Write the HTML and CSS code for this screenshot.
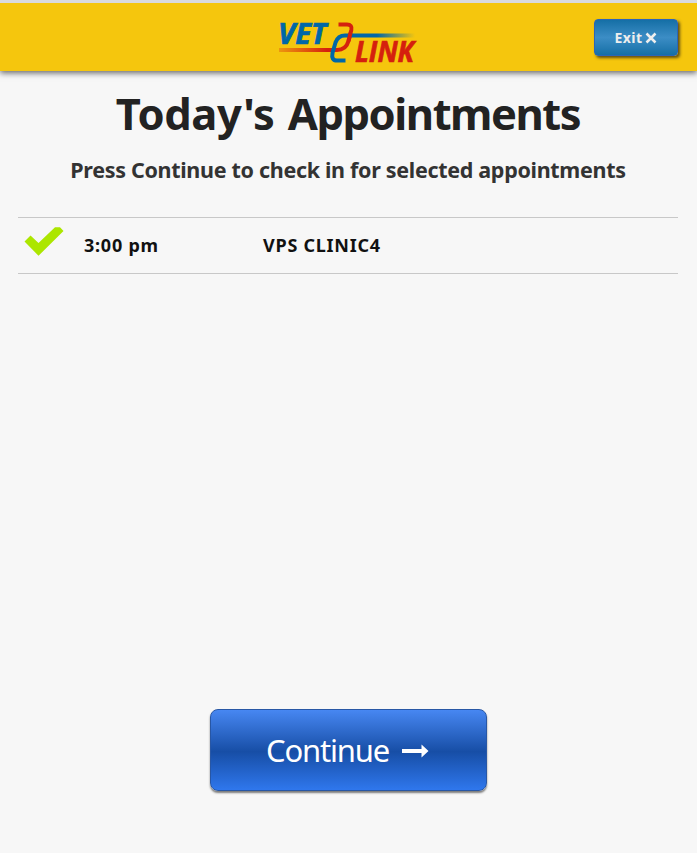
FILE: index.html
```html
<!DOCTYPE html>
<html lang="en">
<head>
<meta charset="utf-8">
<title>Today's Appointments</title>
<link rel="stylesheet" href="styles.css">
</head>
<body>
<header class="bar">
  <svg class="logo" width="150" height="60" viewBox="0 0 150 60" role="img" aria-label="VetLink">
    <defs>
      <linearGradient id="red" gradientUnits="userSpaceOnUse" x1="2" y1="0" x2="50" y2="0"><stop offset="0" stop-color="#d92a0d" stop-opacity=".3"/><stop offset="1" stop-color="#d5200e"/></linearGradient>
      <linearGradient id="blue" gradientUnits="userSpaceOnUse" x1="100" y1="0" x2="138" y2="0"><stop offset="0" stop-color="#0067a8"/><stop offset="1" stop-color="#0067a8" stop-opacity="0"/></linearGradient>
    </defs>
    <text class="logo-text vet" x="1" y="32.500" textLength="48.500" lengthAdjust="spacingAndGlyphs">VET</text>
    <text class="logo-text link" x="78" y="51" textLength="59" lengthAdjust="spacingAndGlyphs">LINK</text>
    <path d="M61.500 13.500H70Q75.500 13.500 74.300 19L71.500 30Q69 39 60 39H2" fill="none" stroke="url(#red)" stroke-width="4"/>
    <path d="M68.500 49.500H60Q54 49.500 55.500 42L58.500 31.500Q61 24.500 68 24.500H138" fill="none" stroke="url(#blue)" stroke-width="4"/>
    <path d="M73.500 22L71.500 30" fill="none" stroke="#d5200e" stroke-width="4"/>
  </svg>
  <button class="exit"><span>Exit</span>
    <svg width="12" height="12" viewBox="0 0 12 12"><path d="M1.500 1.500L10.500 10.500M10.500 1.500L1.500 10.500" stroke="#eee" stroke-width="2.500"/></svg>
  </button>
</header>
<main>
  <h1><span class="first">Today's</span> <span class="second">Appointments</span></h1>
  <h2>Press Continue to check in for selected appointments</h2>
  <div class="row">
    <svg class="check" width="40" height="30" viewBox="0 0 40 30"><path d="M.500 14.500L6.500 8.500L14.500 16L31 .200H36L39.500 4L14.500 28.800Z" fill="#ace600"/></svg>
    <span class="time">3:00 pm</span>
    <span class="clinic">VPS CLINIC4</span>
  </div>
</main>
<footer>
  <button class="continue"><span>Continue</span>
    <svg width="27" height="14" viewBox="0 0 27 14"><path d="M0 5H19.500V.500L26.500 7L19.500 13.500V9H0Z" fill="#fff"/></svg>
  </button>
</footer>
</body>
</html>
```
FILE: styles.css
```css
* { box-sizing: border-box; }
body {
  margin: 0;
  height: 853px;
  display: flex;
  flex-direction: column;
  overflow: hidden;
  background: #f7f7f7;
  font-family: "Noto Sans", sans-serif;
}
.bar {
  height: 71px;
  flex: none;
  padding: 0 19px 0 0;
  border-top: 3px solid #d9dade;
  background: #f5c60d;
  box-shadow: 0 2px 6px rgba(0, 0, 0, .6);
  display: grid;
  grid-template-columns: 277px 1fr auto;
}
.logo { grid-column: 2; margin-top: 8px; }
.logo-text { font: italic 700 28.500px "Open Sans", sans-serif; stroke-width: .7px; }
.vet { fill: #0067a8; stroke: #0067a8; }
.link { fill: #d5200e; stroke: #d5200e; }
button { font-family: inherit; padding: 0; display: flex; align-items: center; justify-content: center; }
.exit {
  width: 84px;
  height: 37px;
  margin-top: 16px;
  gap: 3px;
  border: 1px solid #2b65b8;
  border-radius: 4px;
  background: linear-gradient(#156fa6, #3c8dc5 50%, #156fa6);
  box-shadow: 2px 2px 3px rgba(60, 50, 20, .8);
  color: #eee;
  font-size: 14px;
  font-weight: 700;
  letter-spacing: .4px;
}
main { flex: 1; padding: 0 19px 0 18px; }
h1 {
  margin: 12px 0 0;
  color: #222;
  font-size: 43.500px;
  line-height: 60px;
  text-align: center;
  white-space: nowrap;
  word-spacing: 2px;
}
.first { letter-spacing: -.4px; }
.second { letter-spacing: -1.450px; }
h2 {
  margin: 12px 0 0;
  color: #333;
  font-size: 21.500px;
  line-height: 30px;
  letter-spacing: -.31px;
  text-align: center;
  white-space: nowrap;
}
.row {
  margin-top: 32px;
  height: 57px;
  border: solid #c8c8c8;
  border-width: 1px 0;
  display: grid;
  grid-template-columns: 66px 179px 1fr;
  align-items: center;
  color: #111;
  font-size: 18px;
  font-weight: 700;
}
.check { margin: -8px 0 0 6px; }
.time, .clinic { letter-spacing: .75px; margin-top: -2px; }
footer { height: 144px; padding-right: 1px; display: flex; justify-content: center; align-items: flex-start; }
.continue {
  width: 277px;
  height: 82px;
  gap: 13px;
  padding-right: 1px;
  border: 1px solid #2857a5;
  border-radius: 8px;
  background: linear-gradient(#4787f2, #174ea6 52%, #2f77ed);
  box-shadow: 0 2px 2px rgba(0, 0, 0, .5);
  color: #fff;
  font-size: 31px;
  letter-spacing: -1.200px;
}
.continue svg { margin-top: 2px; }
```
